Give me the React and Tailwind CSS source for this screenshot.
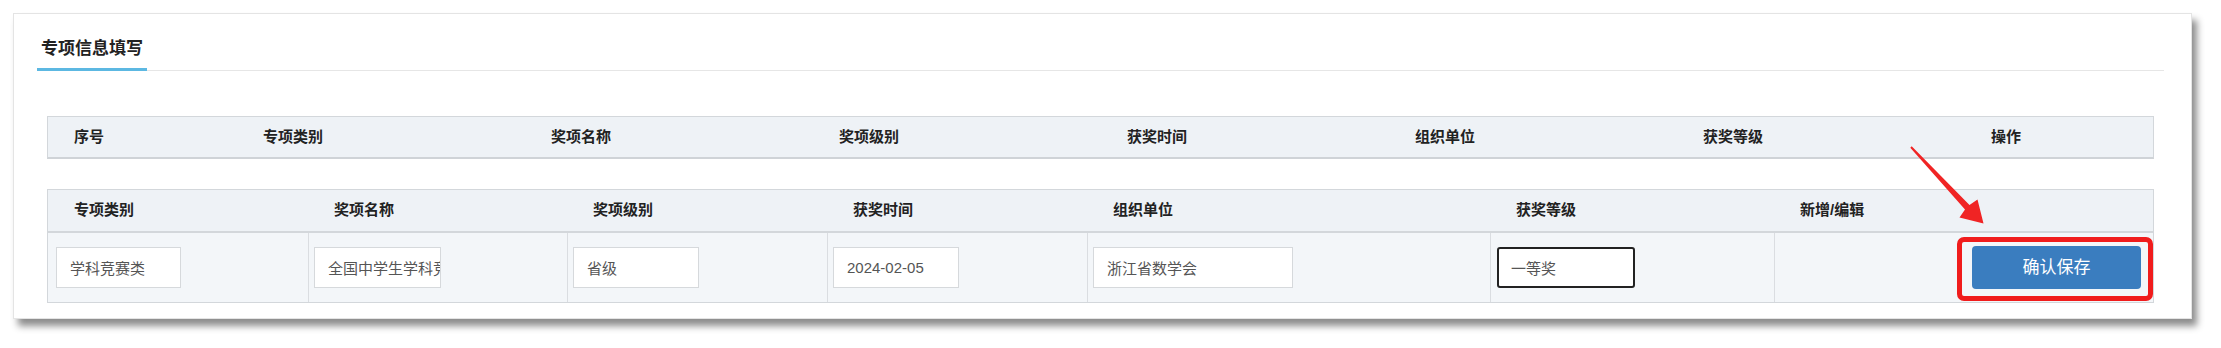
import { useState } from 'react'

const topCols = ['序号', '专项类别', '奖项名称', '奖项级别', '获奖时间', '组织单位', '获奖等级', '操作']
const editCols = ['专项类别', '奖项名称', '奖项级别', '获奖时间', '组织单位', '获奖等级', '新增/编辑']

// Input widths follow the reference: each box sits near the left of its cell
const fields = [
  { key: 'type', width: 'w-[125px]', value: '学科竞赛类' },
  { key: 'name', width: 'w-[127px]', value: '全国中学生学科竞赛' },
  { key: 'level', width: 'w-[126px]', value: '省级' },
  { key: 'date', width: 'w-[126px]', value: '2024-02-05' },
  { key: 'org', width: 'w-[200px]', value: '浙江省数学会' },
]

function Field({ width, value, onChange, focused = false }) {
  return (
    <input
      value={value}
      onChange={(e) => onChange(e.target.value)}
      className={
        focused
          ? `${width} h-[41px] rounded-[3px] border-2 border-[#222] bg-white pl-[12px] pr-0 text-[15px] text-[#555] outline-none`
          : `${width} h-[41px] border border-[#d6d9dc] bg-white pl-[13px] pr-0 text-[15px] text-[#555] outline-none`
      }
    />
  )
}

export default function App() {
  const [form, setForm] = useState(() => {
    const init = {}
    fields.forEach((f) => (init[f.key] = f.value))
    init.grade = '一等奖'
    return init
  })

  const update = (key) => (v) => setForm((prev) => ({ ...prev, [key]: v }))

  return (
    <div className="relative w-[2221px] h-[348px] bg-white pt-[13px] pl-[13px] font-['Liberation_Sans','Noto_Sans_CJK_SC',sans-serif]">
      {/* Card */}
      <div className="w-[2179px] h-[306px] border border-[#e4e4e4] bg-white pt-[23px] pl-[23px] pr-[27px] shadow-[5px_7px_7px_rgba(0,0,0,0.45)]">
        {/* Section tab */}
        <div className="flex border-b border-[#e6e6e6]">
          <div className="-mb-px px-1 pb-[7px] border-b-[3px] border-[#5cb8e2] text-[17px] leading-6 font-bold text-[#222]">
            专项信息填写
          </div>
        </div>

        <div className="ml-[10px] w-[2107px]">
          {/* Summary table header */}
          <div className="mt-[45px] grid h-[43px] grid-cols-[189px_288px_288px_288px_288px_288px_288px_188px] items-center border border-[#d3d7db] border-b-2 border-b-[#cfd3d7] bg-[#eef2f6]">
            {topCols.map((c) => (
              <div key={c} className="pl-[26px] text-[15px] font-bold text-[#222]">
                {c}
              </div>
            ))}
          </div>

          {/* Edit table */}
          <div className="mt-[30px] border border-[#d3d7db]">
            <div className="grid h-[43px] grid-cols-[260px_259px_260px_260px_403px_284px_379px] items-center border-b-2 border-[#d3d7db] bg-[#eef2f6]">
              {editCols.map((c) => (
                <div key={c} className="pl-[26px] text-[15px] font-bold text-[#222]">
                  {c}
                </div>
              ))}
            </div>
            <div className="grid h-[69px] grid-cols-[260px_259px_260px_260px_403px_284px_379px] bg-[#f3f6f9]">
              {fields.map((f, i) => (
                <div
                  key={f.key}
                  className={i === 0 ? 'flex items-center pl-[8px]' : 'flex items-center border-l border-[#dadde1] pl-[5px]'}
                >
                  <Field width={f.width} value={form[f.key]} onChange={update(f.key)} />
                </div>
              ))}
              <div className="flex items-center border-l border-[#dadde1] pl-[6px]">
                <Field width="w-[138px]" value={form.grade} onChange={update('grade')} focused />
              </div>
              <div className="flex items-center justify-end border-l border-[#dadde1] pr-[12px]">
                <button className="h-[43px] w-[169px] rounded-[4px] bg-[#3a7dbf] text-[17px] text-white">
                  确认保存
                </button>
              </div>
            </div>
          </div>
        </div>
      </div>

      {/* Annotation: red highlight around the save button */}
      <div className="absolute left-[1957px] top-[237px] h-[64px] w-[196px] rounded-[7px] border-[5px] border-[#f01c1c]"></div>

      {/* Annotation: red arrow */}
      <svg className="absolute left-[1900px] top-[140px]" width="100" height="100" viewBox="0 0 100 100">
        <polygon
          points="10.3,7.7 65,69.5 59.5,77.5 83.5,83.5 77.5,59.5 69.5,65 11.7,6.3"
          fill="#f02424"
        />
      </svg>
    </div>
  )
}
